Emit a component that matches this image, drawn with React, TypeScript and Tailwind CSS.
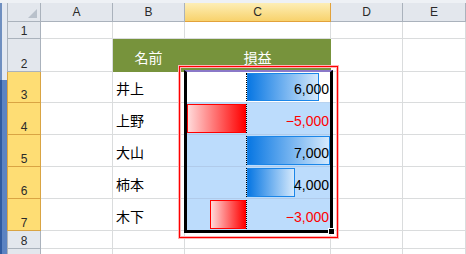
import React from "react";

const rows = [
  { name: "井上", value: 6000, bar: 72 },
  { name: "上野", value: -5000, bar: 59 },
  { name: "大山", value: 7000, bar: 83 },
  { name: "柿本", value: 4000, bar: 48 },
  { name: "木下", value: -3000, bar: 36 },
];

const fmt = (v: number) =>
  (v < 0 ? "−" : "") + Math.abs(v).toLocaleString("en-US");

const cell = "border-r border-b border-[#dadcdd] bg-white";
const grayHead =
  "bg-[#e3e7ed] border-r border-b border-[#aab2bc] text-[12px] text-[#2a2a2a] flex justify-center";
const selHead =
  "bg-[#fedd74] border-r border-b border-[#d9a443] text-[12px] text-[#2a2a2a] flex justify-center";

const RowHead = ({ n, sel }: { n?: number; sel?: boolean }) => (
  <div className={`${sel ? selHead : grayHead} border-l items-end leading-[14px]`}>
    {n}
  </div>
);

const Blank = () => <div className={cell} />;

const DataCell = ({ value, bar, active }: { value: number; bar: number; active: boolean }) => (
  <div
    className={`grid border-r border-b ${
      active ? "bg-white border-[#b8d2ef]" : "bg-[#bcdcfc] border-[#b0cbea]"
    }`}
  >
    <div className="col-start-1 row-start-1 flex py-[1px]">
      <div className="w-[61px] flex justify-end">
        {value < 0 && (
          <div
            className="h-full border border-[#ff0000] bg-[linear-gradient(to_right,#ffdada,#ff0000)]"
            style={{ width: bar }}
          />
        )}
      </div>
      <div className="flex-1 border-l border-dotted border-black">
        {value > 0 && (
          <div
            className="h-full border border-[#1b86e8] bg-[linear-gradient(to_right,#0877e3,#d5e9fc)]"
            style={{ width: bar }}
          />
        )}
      </div>
    </div>
    <div
      className={`col-start-1 row-start-1 flex items-end justify-end pr-[1px] pb-[5px] text-[14px] leading-[16px] ${
        value < 0 ? "text-[#ff0000]" : "text-black"
      }`}
    >
      {fmt(value)}
    </div>
  </div>
);

export default function App() {
  return (
    <div className="relative w-[466px] h-[254px] overflow-hidden bg-white font-['Liberation_Sans','Noto_Sans_CJK_JP',sans-serif]">
      <div className="h-[3px] bg-[#eef1f5]" />
      <div className="flex">
        {/* window edge */}
        <div className="w-[7px] flex flex-col h-[251px]">
          <div className="h-[77px] border-l-2 border-[#6f8fc0] bg-[#e4e9f1]" />
          <div className="flex-1 border-l-2 border-[#2f5aa0] bg-[#5b83c2]" />
        </div>

        <div className="grid grid-cols-[34px_72px_72px_146px_72px_1fr] grid-rows-[19px_17px_33px_31px_32px_32px_32px_32px_18px_18px] flex-1 h-[264px]">
          {/* column headers */}
          <div className={`${grayHead} border-l relative`}>
            <svg className="absolute right-[3px] bottom-[3px]" width="9" height="9" viewBox="0 0 9 9">
              <polygon points="9,0 9,9 0,9" fill="#b9c1cb" />
            </svg>
          </div>
          <div className={`${grayHead} items-center`}>A</div>
          <div className={`${grayHead} items-center`}>B</div>
          <div className="bg-[linear-gradient(#fdeeb6,#f8d26c)] border-r border-b border-[#e2a23b] text-[12px] text-[#2a2a2a] flex justify-center items-center">
            C
          </div>
          <div className={`${grayHead} items-center`}>D</div>
          <div className={`${grayHead} items-center`}>E</div>

          {/* row 1 */}
          <RowHead n={1} />
          <Blank />
          <Blank />
          <Blank />
          <Blank />
          <Blank />

          {/* row 2 */}
          <RowHead n={2} />
          <Blank />
          <div className="bg-[#77933c] border-b border-r border-[#77933c] text-white text-[14px] leading-[16px] flex items-end justify-center pb-[5px]">
            名前
          </div>
          <div className="bg-[#77933c] border-b border-r border-[#77933c] text-white text-[14px] leading-[16px] flex items-end justify-center pb-[5px]">
            損益
          </div>
          <Blank />
          <Blank />

          {/* rows 3-7 */}
          {rows.map((r, i) => (
            <React.Fragment key={r.name}>
              <RowHead n={i + 3} sel />
              <Blank />
              <div className={`${cell} flex items-end pl-[3px] pb-[5px] text-[14px] leading-[16px] text-black`}>
                {r.name}
              </div>
              <DataCell value={r.value} bar={r.bar} active={i === 0} />
              <Blank />
              <Blank />
            </React.Fragment>
          ))}

          {/* row 8, top of row 9 */}
          <RowHead n={8} />
          <Blank />
          <Blank />
          <Blank />
          <Blank />
          <Blank />
          <RowHead />
          <Blank />
          <Blank />
          <Blank />
          <Blank />
          <Blank />
        </div>
      </div>

      {/* selection box C3:C7 */}
      <div className="absolute left-[184px] top-[70px] w-[149px] h-[163px] border-[3px] border-t-2 border-black border-t-[#8a78c8]" />
      <div className="absolute left-[328px] top-[228px] w-[7px] h-[7px] bg-black border border-white" />

      {/* red annotation frame */}
      <div className="absolute left-[179px] top-[66px] w-[159px] h-[172px] border border-[#ff0000] shadow-[0_0_0_1px_#ffb3b3,inset_0_0_0_1px_#ffb3b3]" />
    </div>
  );
}
